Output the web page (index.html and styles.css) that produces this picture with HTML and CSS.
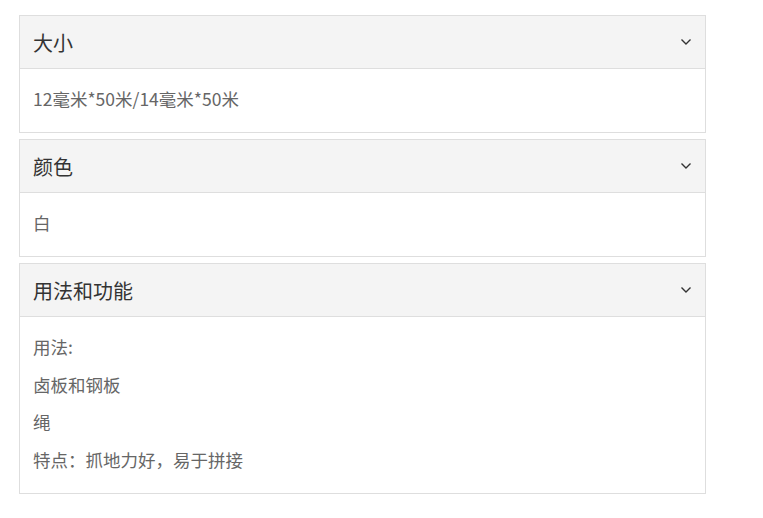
FILE: index.html
```html
<!DOCTYPE html>
<html lang="zh-CN">
<head>
    <meta charset="UTF-8">
    <meta name="viewport" content="width=device-width, initial-scale=1.0">
    <title>产品规格</title>
    <link rel="stylesheet" href="styles.css">
</head>
<body>
<div class="container">
    <div class="panel">
        <div class="panel-head">
            <span>大小</span>
            <svg class="chev" viewBox="0 0 12 8" width="12" height="8"><path d="M1.5 1.5 L6 6 L10.5 1.5" /></svg>
        </div>
        <div class="panel-body">
            <p>12毫米*50米/14毫米*50米</p>
        </div>
    </div>

    <div class="panel">
        <div class="panel-head">
            <span>颜色</span>
            <svg class="chev" viewBox="0 0 12 8" width="12" height="8"><path d="M1.5 1.5 L6 6 L10.5 1.5" /></svg>
        </div>
        <div class="panel-body">
            <p>白</p>
        </div>
    </div>

    <div class="panel">
        <div class="panel-head">
            <span>用法和功能</span>
            <svg class="chev" viewBox="0 0 12 8" width="12" height="8"><path d="M1.5 1.5 L6 6 L10.5 1.5" /></svg>
        </div>
        <div class="panel-body">
            <p>用法:</p>
            <p>卤板和钢板</p>
            <p>绳</p>
            <p>特点：抓地力好，易于拼接</p>
        </div>
    </div>
</div>
</body>
</html>
```

FILE: styles.css
```css
body { margin: 0; padding: 0; background: #fff; font-family: "Noto Sans CJK SC", "Noto Sans", sans-serif; }
.container { width: 687px; padding: 15px 0 0 19px; }
.panel { border: 1px solid #dedede; margin-bottom: 6px; }
.panel-head { display: flex; align-items: center; justify-content: space-between; background: #f4f4f4; border-bottom: 1px solid #dedede; padding: 0 13px; height: 52px; font-size: 20px; color: #333; }
.chev { fill: none; stroke: #333; stroke-width: 1.4; }
.panel-body { padding: 18px 13px 21px; font-size: 17.5px; color: #666; }
.panel-body p { margin: 0 0 13.5px; line-height: 24px; }
.panel-body p:last-child { margin-bottom: 0; }
```
